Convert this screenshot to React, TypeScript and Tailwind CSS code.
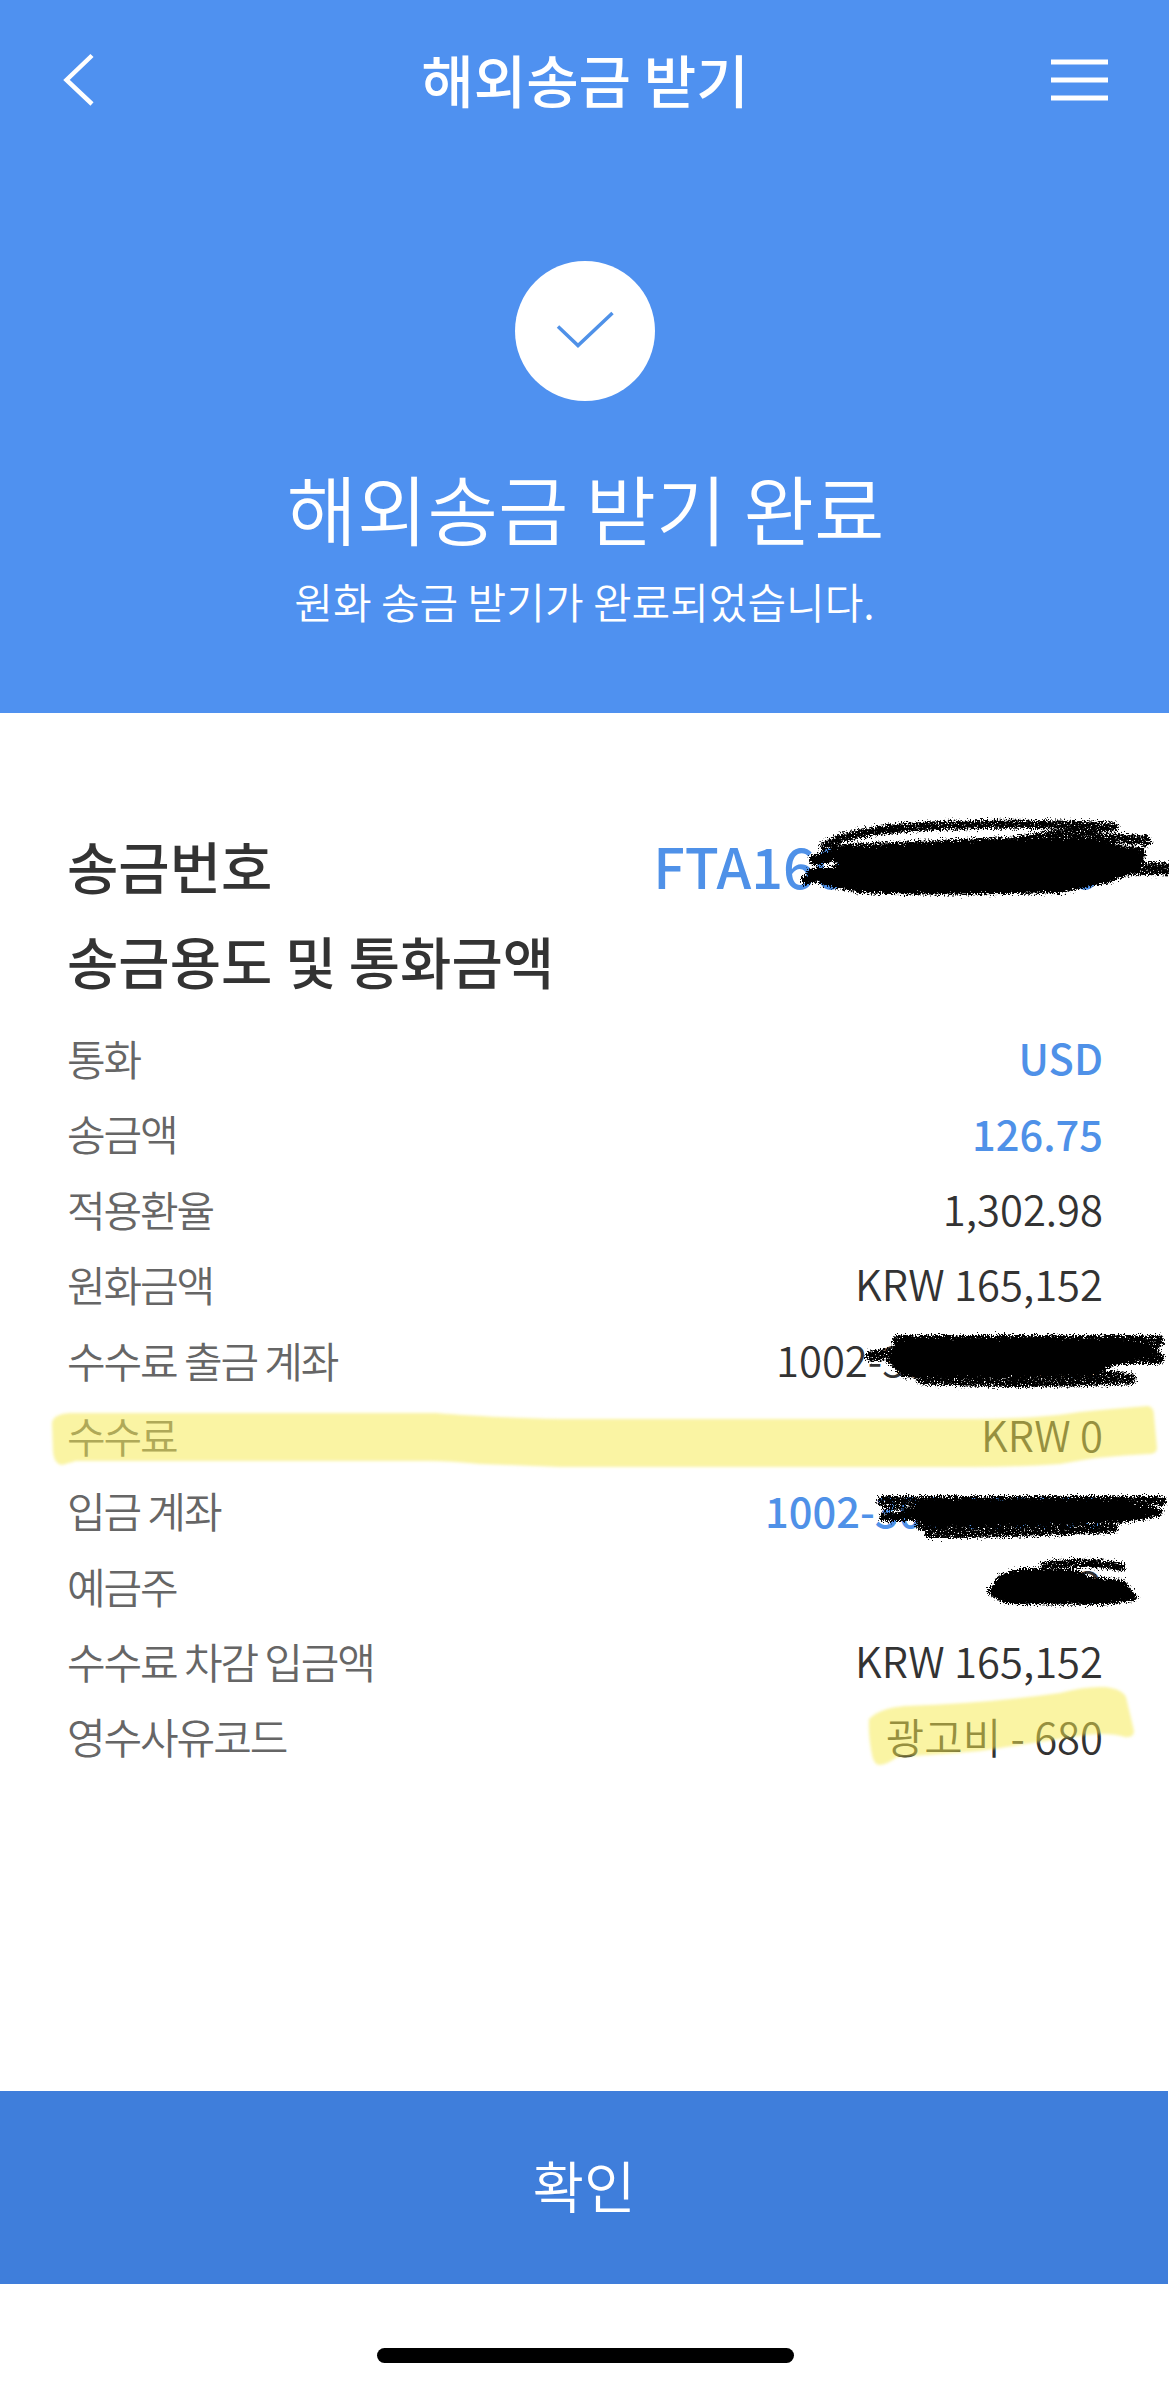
import React from 'react';

type Row = {
  label: string;
  value: string;
  accent?: boolean;
};

const rows: Row[] = [
  { label: '통화', value: 'USD', accent: true },
  { label: '송금액', value: '126.75', accent: true },
  { label: '적용환율', value: '1,302.98' },
  { label: '원화금액', value: 'KRW 165,152' },
  { label: '수수료 출금 계좌', value: '1002-300-000000' },
  { label: '수수료', value: 'KRW 0' },
  { label: '입금 계좌', value: '1002-300-000000', accent: true },
  { label: '예금주', value: 'OOO' },
  { label: '수수료 차감 입금액', value: 'KRW 165,152' },
  { label: '영수사유코드', value: '광고비 - 680' },
];

const Marks = () => (
  <svg className="absolute left-0 top-0 pointer-events-none" width="1169" height="2387" viewBox="0 0 1169 2387" fill="none">
    <defs>
      <filter id="crayon" x="-5%" y="-20%" width="110%" height="140%">
        <feTurbulence type="fractalNoise" baseFrequency="0.7" numOctaves="2" seed="4" result="noise" />
        <feDisplacementMap in="SourceGraphic" in2="noise" scale="11" xChannelSelector="R" yChannelSelector="G" />
      </filter>
      {/* Same as above, with paper grain showing through */}
      <filter id="grain" x="-5%" y="-40%" width="110%" height="180%">
        <feTurbulence type="fractalNoise" baseFrequency="0.7" numOctaves="2" seed="9" result="noise" />
        <feDisplacementMap in="SourceGraphic" in2="noise" scale="11" xChannelSelector="R" yChannelSelector="G" result="rough" />
        <feColorMatrix in="noise" type="matrix" values="0 0 0 0 0  0 0 0 0 0  0 0 0 0 0  0 0 7 0 -1.7" result="mask" />
        <feComposite in="rough" in2="mask" operator="in" />
      </filter>
      <filter id="soft" x="-5%" y="-20%" width="110%" height="140%">
        <feGaussianBlur stdDeviation="1.5" />
      </filter>
    </defs>

    {/* Highlighter */}
    <g fill="#f5ea49" fillOpacity="0.51" filter="url(#soft)">
      <path d="M52 1423Q53 1414 70 1413H436Q480 1417 560 1419H960Q1040 1419 1080 1412Q1110 1409 1148 1406Q1154 1407 1154 1416L1157 1448Q1157 1454 1148 1454Q1100 1456 1060 1464Q1020 1467 970 1467H560L480 1464Q450 1461 430 1461H76Q69 1463 62 1465Q54 1464 53 1452Z" />
      <path d="M869 1719Q880 1708 905 1706Q990 1703 1060 1693Q1085 1686 1105 1687Q1122 1689 1126 1697L1134 1731Q1134 1738 1125 1737Q1110 1732 1085 1735Q1040 1742 980 1751Q930 1755 897 1757Q888 1764 880 1765Q874 1765 872 1755Q868 1735 869 1719Z" />
    </g>

    {/* Scribbles */}
    <g stroke="#000" strokeLinecap="round" strokeLinejoin="round" filter="url(#crayon)">
      <path d="M815 860L850 851" strokeWidth="12" />
      <path d="M806 880L845 868M812 873L850 871" strokeWidth="10" />
      <path d="M836 852Q950 845 1050 841L1100 843L1142 855L1138 867L1108 880L1060 890Q940 893 860 890L822 882L840 868Z" fill="#000" strokeWidth="6" />

      <path d="M900 1343L1120 1343L1155 1351L1112 1361L1092 1371L905 1373L892 1360Z" fill="#000" strokeWidth="9" />

      <path d="M920 1504L1120 1504L1158 1512L1120 1519L930 1522L915 1516L884 1517" strokeWidth="9" fill="#000" />
      <path d="M884 1508L935 1507" strokeWidth="4" />

      <path d="M1022 1572L1075 1573L1090 1581L1122 1584L1133 1597L1100 1601L1007 1600L992 1592L1002 1578Z" fill="#000" strokeWidth="8" />
    </g>
    <g stroke="#000" strokeLinecap="round" strokeLinejoin="round" filter="url(#grain)">
      <path d="M824 846Q850 830 930 826T1114 827Q1060 834 1020 840" strokeWidth="9" />
      <path d="M836 850Q940 845 1040 841T1146 841" strokeWidth="11" />
      <path d="M1080 873Q1120 867 1175 869" strokeWidth="13" />
      <path d="M1100 852L1140 853" strokeWidth="12" />

      <path d="M871 1356L892 1354" strokeWidth="11" />
      <path d="M898 1341H1158L1100 1349M1080 1358H1158" strokeWidth="12" />
      <path d="M922 1379Q1010 1384 1130 1379L1080 1372L920 1376" strokeWidth="11" />

      <path d="M882 1501L1162 1501" strokeWidth="10" />
      <path d="M920 1525L1000 1525L930 1533Q1020 1533 1113 1528L1000 1526" strokeWidth="10" />

      <path d="M1045 1566Q1090 1560 1121 1567" strokeWidth="9" />
    </g>
  </svg>
);

const App = () => {
  return (
    <main className="relative flex flex-col w-[1169px] h-[2387px] bg-white overflow-hidden font-['Noto_Sans_CJK_KR',sans-serif] text-[#333]">
      {/* Top Section */}
      <section className="h-[713px] bg-[#4f91f0] text-white">
        <header className="flex items-center justify-between h-[160px] pl-[62px] pr-[61px]">
          <svg className="w-[57px] h-[54px]" viewBox="0 0 57 54" fill="none" stroke="currentColor" strokeWidth="4.5">
            <path d="M30 2.5L4.5 27L30 51" />
          </svg>
          <h1 className="pb-[4px] text-[57px] leading-[80px] font-medium">해외송금 받기</h1>
          <svg className="w-[57px] h-[42px]" viewBox="0 0 57 42" fill="currentColor">
            <path d="M0 0.5h57v5H0zM0 18.5h57v5H0zM0 36.5h57v5H0z" />
          </svg>
        </header>

        <div className="flex flex-col items-center pt-[101px]">
          <div className="flex items-center justify-center size-[140px] rounded-full bg-white">
            <svg className="w-[60px] h-[40px]" viewBox="0 0 60 40" fill="none" stroke="#4f91e8" strokeWidth="3.5">
              <path d="M3 15.5L23 34.5L57.5 2" />
            </svg>
          </div>
          <h2 className="mt-[51px] pl-[2px] text-[76.6px] leading-[110px] font-[350]">해외송금 받기 완료</h2>
          <p className="mt-[9px] text-[42px] leading-[60px] font-[350]">원화 송금 받기가 완료되었습니다.</p>
        </div>
      </section>

      {/* Transfer Details */}
      <section className="grow pt-[104px] pl-[67px] pr-[66px]">
        <div className="flex items-center justify-between h-[95.4px] text-[55.8px] font-medium">
          <h3>송금번호</h3>
          <p className="text-[#4f91e8] pr-[2px]">FTA16000000000</p>
        </div>
        <div className="flex items-center h-[95.4px] text-[55.8px] font-medium">
          <h3>송금용도 및 통화금액</h3>
        </div>
        <dl className="mt-[12px] text-[42px]">
          {rows.map((row) => (
            <div key={row.label} className="flex items-center justify-between h-[75.4px]">
              <dt className="text-[#666] font-[350] tracking-[-0.05em]">{row.label}</dt>
              <dd className={row.accent ? 'text-[#4f91e8] text-[41.6px] font-medium' : 'text-[41.8px] font-[350]'}>{row.value}</dd>
            </div>
          ))}
        </dl>
      </section>

      {/* Confirm Button */}
      <button className="shrink-0 w-[1168px] h-[193px] pb-[8px] bg-[#3f7edb] text-white text-[56px] font-[350]">확인</button>
      <div className="shrink-0 flex justify-center h-[103px] pt-[64px] pl-[2px]">
        <div className="w-[417px] h-[15px] rounded-full bg-black" />
      </div>

      <Marks />
    </main>
  );
};

export default App;
